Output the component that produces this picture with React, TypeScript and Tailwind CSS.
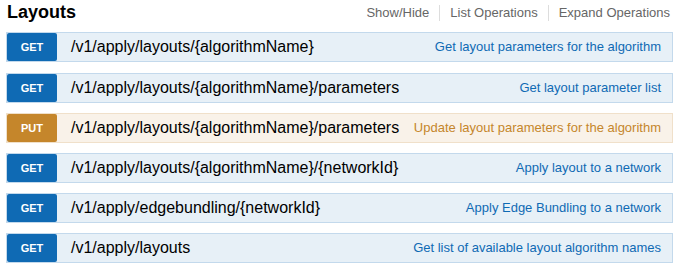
import React from 'react'

type Method = 'GET' | 'PUT'

interface Operation {
  method: Method
  path: string
  summary: string
}

const OPERATIONS: Operation[] = [
  { method: 'GET', path: '/v1/apply/layouts/{algorithmName}', summary: 'Get layout parameters for the algorithm' },
  { method: 'GET', path: '/v1/apply/layouts/{algorithmName}/parameters', summary: 'Get layout parameter list' },
  { method: 'PUT', path: '/v1/apply/layouts/{algorithmName}/parameters', summary: 'Update layout parameters for the algorithm' },
  { method: 'GET', path: '/v1/apply/layouts/{algorithmName}/{networkId}', summary: 'Apply layout to a network' },
  { method: 'GET', path: '/v1/apply/edgebundling/{networkId}', summary: 'Apply Edge Bundling to a network' },
  { method: 'GET', path: '/v1/apply/layouts', summary: 'Get list of available layout algorithm names' },
]

const METHOD_STYLES: Record<Method, { row: string; badge: string; summary: string }> = {
  GET: {
    row: 'bg-[#e7f0f7] border-[#c3d9ec]',
    badge: 'bg-[#0f6ab4]',
    summary: 'text-[#0f6ab4]',
  },
  PUT: {
    row: 'bg-[#f9f2e9] border-[#f0e0ca]',
    badge: 'bg-[#c5862b]',
    summary: 'text-[#c5862b]',
  },
}

function OperationRow({ op, first }: { op: Operation; first: boolean }) {
  const s = METHOD_STYLES[op.method]
  return (
    <div className={`flex h-[30px] items-center border ${s.row} ${first ? 'mb-[1px]' : ''}`}>
      <span
        className={`flex h-[28px] w-[50px] items-center justify-center rounded-[2px] pt-[1px] text-[11px] font-bold text-white ${s.badge}`}
      >
        {op.method}
      </span>
      <span className="ml-[14px] text-[16px] text-black">{op.path}</span>
      <span className={`ml-auto pr-[11px] text-[13px] ${s.summary}`}>{op.summary}</span>
    </div>
  )
}

export default function App() {
  return (
    <div className="h-[266px] w-[676px] bg-white font-['Liberation_Sans',Arial,sans-serif]">
      <div className="flex h-[32px] items-start justify-between pl-[7px] pr-[6px]">
        <h2 className="mt-[1px] text-[18px] font-bold leading-[22px] text-black">Layouts</h2>
        <ul className="mt-[5px] flex text-[13px] leading-[16px] text-[#666]">
          <li className="border-r border-[#ddd] pr-[10px]">Show/Hide</li>
          <li className="border-r border-[#ddd] px-[10px]">List Operations</li>
          <li className="pl-[10px]">Expand Operations</li>
        </ul>
      </div>
      <div className="ml-[6px] flex w-[667px] flex-col gap-[10px]">
        {OPERATIONS.map((op, i) => (
          <OperationRow key={i} op={op} first={i === 0} />
        ))}
      </div>
    </div>
  )
}
